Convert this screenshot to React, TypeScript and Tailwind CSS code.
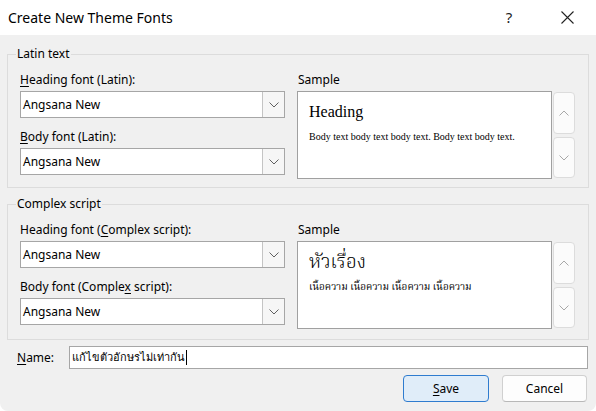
import React from "react";

const SANS = "font-['Noto_Sans','Liberation_Sans',sans-serif]";
const SERIF = "font-['Liberation_Serif','Noto_Serif_Thai','Noto_Sans_Thai','Garuda','Loma','Tlwg_Typo',serif]";

function Down({ color = "#606060" }: { color?: string }) {
  return (
    <svg width="10" height="6" viewBox="0 0 10 6">
      <polyline points="0.5,0.5 5,5 9.5,0.5" fill="none" stroke={color} strokeWidth="1" />
    </svg>
  );
}

function Up({ color = "#a8a8a8" }: { color?: string }) {
  return (
    <svg width="10" height="6" viewBox="0 0 10 6">
      <polyline points="0.5,5.5 5,1 9.5,5.5" fill="none" stroke={color} strokeWidth="1" />
    </svg>
  );
}

function U({ children }: { children: React.ReactNode }) {
  return <span className="underline underline-offset-[2px]">{children}</span>;
}

function FontSelect() {
  return (
    <div className="flex h-[27px] w-[265px] border border-[#a6a6a6] bg-white">
      <div className="flex flex-1 items-center pl-[2px] text-[12px] text-black">Angsana New</div>
      <div className="flex w-[22px] items-center justify-center border-l border-[#c4c4c4] bg-[#f6f6f6]">
        <Down />
      </div>
    </div>
  );
}

function ScrollBtns() {
  return (
    <div className="flex flex-col gap-[3px] pt-[1px]">
      <div className="flex h-[42px] w-[22px] items-center justify-center rounded-[4px] border border-[#dcdcdc] bg-[#fbfbfb]">
        <Up />
      </div>
      <div className="flex h-[41px] w-[22px] items-center justify-center rounded-[4px] border border-[#dcdcdc] bg-[#fbfbfb]">
        <Down color="#a8a8a8" />
      </div>
    </div>
  );
}

function Group({
  title,
  headingLabel,
  bodyLabel,
  sampleHeading,
  sampleBody,
  thai,
  bottom,
}: {
  title: string;
  headingLabel: React.ReactNode;
  bodyLabel: React.ReactNode;
  sampleHeading: string;
  sampleBody: string;
  thai?: boolean;
  bottom: string;
}) {
  return (
    <div className={"relative mx-[7px] border border-[#dcdcdc] pl-[12px] pr-[13px] pt-[17px] " + bottom}>
      <span className="absolute left-[8px] top-[-9px] bg-[#f0f0f0] px-[1px] text-[12px] leading-[16px] text-black">
        {title}
      </span>
      <div className="flex gap-[12px]">
        <div className="flex flex-col">
          <div className="mb-[3px] h-[16px] text-[12px] leading-[16px] text-black">{headingLabel}</div>
          <FontSelect />
          <div className="mb-[3px] mt-[11px] h-[16px] text-[12px] leading-[16px] text-black">{bodyLabel}</div>
          <FontSelect />
        </div>
        <div className="flex flex-col">
          <div className="mb-[3px] h-[16px] pl-[1px] text-[12px] leading-[16px] text-black">Sample</div>
          <div className="flex gap-[1px]">
            <div className={"h-[88px] w-[255px] border border-[#a0a0a0] bg-white pl-[11px] pt-[10px] text-black " + SERIF}>
              {thai ? (
                <>
                  <div className="text-[19px] font-light leading-[20px]">{sampleHeading}</div>
                  <div className="mt-[9px] text-[10px] leading-[12px]">{sampleBody}</div>
                </>
              ) : (
                <>
                  <div className="text-[16px] leading-[20px]">{sampleHeading}</div>
                  <div className="mt-[9px] text-[10px] leading-[12px]">{sampleBody}</div>
                </>
              )}
            </div>
            <ScrollBtns />
          </div>
        </div>
      </div>
    </div>
  );
}

export default function App() {
  return (
    <div className={"h-[411px] w-[596px] overflow-hidden bg-white " + SANS}>
      <div className="flex h-full w-full flex-col overflow-hidden rounded-b-[8px] bg-[#f0f0f0]">
        <div className="flex h-[35px] items-center bg-white pl-[8px]">
          <div className="flex-1 text-[14px] text-black">Create New Theme Fonts</div>
          <div className="w-[20px] text-center text-[15px] text-[#222]">?</div>
          <div className="ml-[42px] mr-[22px] flex items-center">
            <svg width="13" height="13" viewBox="0 0 13 13">
              <path d="M0.5 0.5 L12.5 12.5 M12.5 0.5 L0.5 12.5" stroke="#222" strokeWidth="1.1" fill="none" />
            </svg>
          </div>
        </div>
        <div className="h-[19px]" />
        <Group
          title="Latin text"
          headingLabel={
            <>
              <U>H</U>eading font (Latin):
            </>
          }
          bodyLabel={
            <>
              <U>B</U>ody font (Latin):
            </>
          }
          sampleHeading="Heading"
          sampleBody="Body text body text body text. Body text body text."
          bottom="pb-[8px]"
        />
        <div className="h-[16px]" />
        <Group
          title="Complex script"
          headingLabel={
            <>
              Heading font (<U>C</U>omplex script):
            </>
          }
          bodyLabel={
            <>
              Body font (Comple<U>x</U> script):
            </>
          }
          sampleHeading="หัวเรื่อง"
          sampleBody="เนื้อความ เนื้อความ เนื้อความ เนื้อความ"
          thai
          bottom="pb-[10px]"
        />
        <div className="mt-[6px] flex items-center pl-[17px] pr-[8px]">
          <div className="w-[52px] text-[12px] text-black">
            <U>N</U>ame:
          </div>
          <div className="flex h-[23px] flex-1 items-center border border-[#a6a6a6] bg-white pl-[2px] text-[11px] text-black">
            <span>แก้ไขตัวอักษรไม่เท่ากัน</span>
            <span className="ml-[1px] h-[15px] w-[1px] bg-black" />
          </div>
        </div>
        <div className="mt-[6px] flex justify-end gap-[13px] pr-[9px]">
          <button className="h-[27px] w-[86px] rounded-[4px] border border-[#2f7ccf] bg-[#e0edf9] text-[12px] text-black">
            <U>S</U>ave
          </button>
          <button className="h-[27px] w-[85px] rounded-[4px] border border-[#d0d0d0] border-b-[#b8b8b8] bg-[#fdfdfd] text-[12px] text-black">
            Cancel
          </button>
        </div>
      </div>
    </div>
  );
}
